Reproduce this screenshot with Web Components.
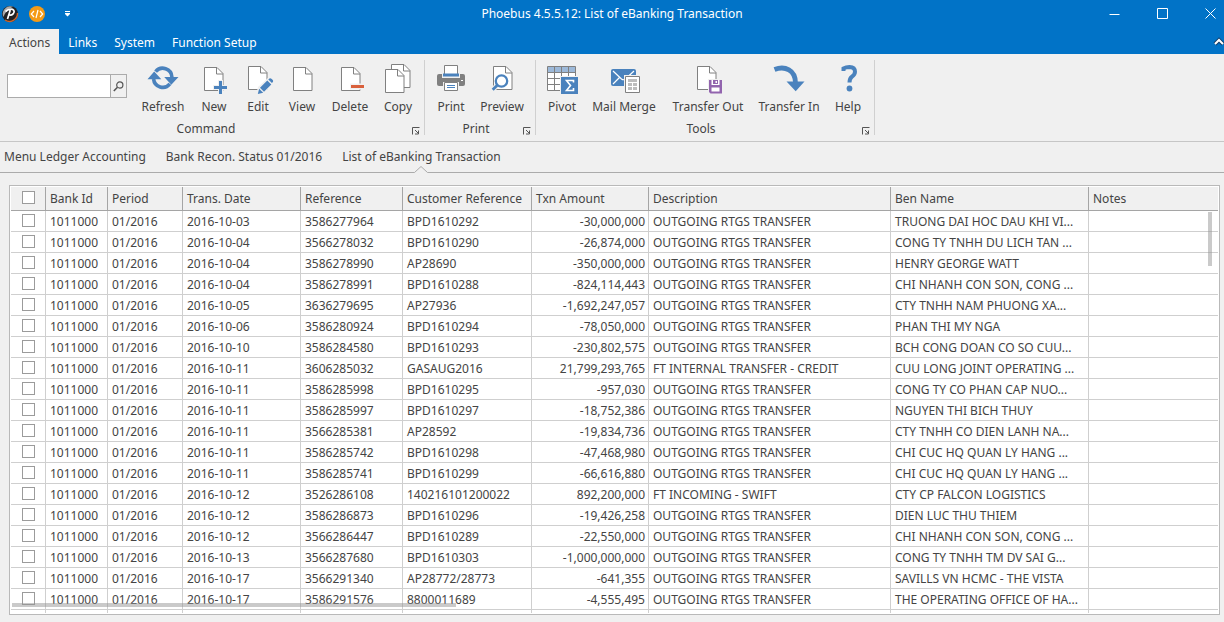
<!DOCTYPE html>
<html lang="en">
<head>
<meta charset="utf-8">
<title>Phoebus 4.5.5.12: List of eBanking Transaction</title>
<style>
  html, body { margin: 0; height: 100%; }
  body {
    font: 12px/16px "Noto Sans", "Open Sans", sans-serif;
    color: #444;
    background: #f0f0f0;
    --blue: #0173c7;
    --face: #f0f0f0;
    --accent: #4a82bd;
    --line: #808080;
  }
</style>
</head>
<body>
<app-window>
  <title-bar slot="title">Phoebus 4.5.5.12: List of eBanking Transaction</title-bar>
  <ribbon-tabs slot="tabs">
    <ribbon-tab active>Actions</ribbon-tab>
    <ribbon-tab>Links</ribbon-tab>
    <ribbon-tab>System</ribbon-tab>
    <ribbon-tab>Function Setup</ribbon-tab>
  </ribbon-tabs>
  <ribbon-bar slot="ribbon">
    <ribbon-group label="Command">
      <search-box></search-box>
      <ribbon-button icon="refresh" size="l">Refresh</ribbon-button>
      <ribbon-button icon="new">New</ribbon-button>
      <ribbon-button icon="edit">Edit</ribbon-button>
      <ribbon-button icon="view">View</ribbon-button>
      <ribbon-button icon="delete" size="m">Delete</ribbon-button>
      <ribbon-button icon="copy">Copy</ribbon-button>
    </ribbon-group>
    <ribbon-group label="Print">
      <ribbon-button icon="print">Print</ribbon-button>
      <ribbon-button icon="preview" size="l">Preview</ribbon-button>
    </ribbon-group>
    <ribbon-group label="Tools">
      <ribbon-button icon="pivot">Pivot</ribbon-button>
      <ribbon-button icon="mail" size="xl">Mail Merge</ribbon-button>
      <ribbon-button icon="out" size="xxl">Transfer Out</ribbon-button>
      <ribbon-button icon="in" size="ml">Transfer In</ribbon-button>
      <ribbon-button icon="help">Help</ribbon-button>
    </ribbon-group>
  </ribbon-bar>
  <doc-tabs slot="docs">
    <doc-tab>Menu Ledger Accounting</doc-tab>
    <doc-tab>Bank Recon. Status 01/2016</doc-tab>
    <doc-tab active>List of eBanking Transaction</doc-tab>
  </doc-tabs>
  <data-grid></data-grid>
</app-window>

<script>
const page = (x, y) =>
  `<path d="M${x + .5} ${y + .5}h12.5l6 6v17h-18.5z" fill="#fff" stroke="var(--line)"/>
   <path d="M${x + 12.5} ${y + .5}v6.5h6.5" fill="none" stroke="var(--line)"/>`;

const ICONS = {
  refresh: `<g fill="none" stroke="var(--accent)" stroke-width="3.6">
      <path d="M8.6 8.6A9.2 9.2 0 0 1 24.9 14"/><path d="M6.6 16A9.2 9.2 0 0 0 22.9 20.9"/></g>
      <path d="M.5 16.3h13.8L7.2 8.6zM17.2 14h14.3l-7.2 7.8z" fill="var(--accent)"/>`,
  new: page(6, 4) + `<path d="M22.5 17v15M15 24.5h15" stroke="var(--face)" stroke-width="5"/>
      <path d="M22.5 18v13M16 24.5h13" stroke="var(--accent)" stroke-width="3"/>`,
  edit: page(6, 3) + `<path d="M14 32l2-8 11-10 6 5-11 11z" fill="var(--face)"/>
      <path d="M18 24.800l7.300-7.300 4 4-7.300 7.300zM26.300 16.500l1.100-1q1-.6 2 .2l1.400 1.400q.7 1 .1 1.900l-1 1.100z" fill="var(--accent)"/>
      <path d="M17.100 25.700l4.100 4.100-5.400 1.200z" fill="var(--accent)"/>`,
  view: page(7, 4),
  delete: page(7, 4) + `<path d="M16 20.500h15v6h-15z" fill="var(--face)"/><path d="M17 22h13v3h-13z" fill="#d9603b"/>`,
  copy: page(9, 1) + page(3, 6),
  print: `<path d="M4 11h24q2 0 2 2v8q0 2-2 2h-24q-2 0-2-2v-8q0-2 2-2z" fill="var(--line)"/>
      <path d="M7 10h18v5h-18z" fill="var(--face)"/>
      <path d="M9.500 12V2.500h13V12z" fill="#fff" stroke="var(--line)"/><path d="M8 10.500h16v3h-16z" fill="var(--accent)"/>
      <path d="M8 19h16v5h-16z" fill="var(--face)"/><path d="M9.500 19.500h13v8h-13z" fill="#fff" stroke="var(--line)"/>
      <path d="M12 22.500h8M12 24.500h8" stroke="var(--accent)"/><path d="M26 17h2v1h-2z" fill="#fff"/>`,
  preview: page(7, 3) + `<path d="M11 22.500l-5 5" stroke="var(--face)" stroke-width="5"/>
      <circle cx="15.500" cy="18" r="5.700" fill="#fff" stroke="var(--accent)" stroke-width="2.300"/>
      <path d="M11.500 22l-4.800 4.800" stroke="var(--accent)" stroke-width="2.800"/>`,
  pivot: `<path d="M1.500 3.500h28v24h-28z" fill="#fff"/><path d="M1.500 3.500h28v6h-28z" fill="#9db9d9"/>
      <path d="M1.500 3.500h28v24h-28zM8.500 3.500v24M15.500 3.500v24M22.500 3.500v24M1.500 9.500h28M1.500 15.500h28M1.500 21.500h28" fill="none" stroke="var(--line)"/>
      <path d="M14 13h18v19h-18z" fill="var(--face)"/><path d="M15 14h17v17h-17z" fill="var(--accent)"/>
      <path d="M27.500 19.500v-2h-7l4 5-4 5h7v-2.500" fill="none" stroke="#fff" stroke-width="1.600"/>`,
  mail: `<path d="M5 6h21q2 0 2 2v15h-23q-2 0-2-2v-13q0-2 2-2z" fill="var(--accent)"/>
      <path d="M5 8l8.500 8q2 1.500 4 0L26 8M5 21l7-7M25 20l-6-5" fill="none" stroke="#fff" stroke-width="1.200"/>
      <path d="M16 12h17v19h-17z" fill="var(--face)"/><path d="M17.500 13.500h14v16h-14z" fill="#fff" stroke="var(--line)"/>
      <path d="M20 16h9v3h-9zM20 20h4v3h-4zM25 20h4v3h-4zM20 24h4v3h-4zM25 24h4v3h-4z" fill="#bdbdbd"/>`,
  out: page(5, 3) + `<path d="M16 16h15v15h-15z" fill="var(--face)"/>
      <path d="M17 17h13v13.500h-11.500l-1.500-1.500z" fill="#9264ae"/><path d="M19.500 17h8v5h-8zM19.500 24.500h8v4h-8z" fill="#fff"/>
      <path d="M21 17h5v4h-5z" fill="#9264ae"/><path d="M23.500 18h1.500v2h-1.500z" fill="#fff"/>`,
  in: `<path d="M1.500 6.500C12 2.500 22.500 7 22.500 20" fill="none" stroke="var(--accent)" stroke-width="4.800"/>
      <path d="M13.500 18.500h18l-8.800 9.800z" fill="var(--accent)"/>`,
  help: `<path d="M11.500 8V5.500Q14 4 17.500 4Q23 4.200 23 8.800Q23 11.500 20 13.700Q17.500 15.500 17.500 19.500" fill="none" stroke="var(--accent)" stroke-width="4"/>
      <circle cx="17.500" cy="25.500" r="2.900" fill="var(--accent)"/>`
};

function define(name, markup, setup) {
  const template = document.createElement('template');
  template.innerHTML = markup;
  customElements.define(name, class extends HTMLElement {
    constructor() {
      super();
      this.attachShadow({ mode: 'open' }).append(template.content.cloneNode(true));
    }
    connectedCallback() { if (setup) setup(this, this.shadowRoot); }
  });
}

const RESET = `button { font: inherit; color: inherit; background: none; border: 0; padding: 0; margin: 0; }
  svg { display: block; }`;

define('app-window', `
<style>
  :host { display: flex; flex-direction: column; height: 100vh; min-height: 320px; background: var(--face); }
  header { background: var(--blue); color: #fff; }
  main { flex: 1; min-height: 0; display: flex; padding: 12px 4px 7px 9px; }
  ::slotted(data-grid) { flex: 1; min-width: 0; }
</style>
<header><slot name="title"></slot><slot name="tabs"></slot></header>
<slot name="ribbon"></slot>
<slot name="docs"></slot>
<main><slot></slot></main>`);

define('title-bar', `
<style>${RESET}
  :host { display: grid; grid-template-columns: 1fr auto 1fr; align-items: center; height: 27px; }
  .quick { display: flex; align-items: center; padding-left: 1px; gap: 10px; }
  .more { margin-left: 9px; }
  .controls { display: flex; justify-content: flex-end; gap: 37px; padding-right: 8px; }
</style>
<div class="quick">
  <svg width="18" height="18" viewBox="0 0 18 18" aria-hidden="true">
    <circle cx="9" cy="9" r="8" fill="#222"/>
    <path d="M2.500 12A7.500 7.500 0 0 1 12 1.800Q5 5 2.500 12z" fill="#aaa"/>
    <path d="M4 15A8 8 0 0 0 16.500 8" fill="none" stroke="#c8642d" stroke-width="1.500"/>
    <path d="M4.500 6.500Q8 3.500 11.500 4.300Q14.500 6 12 9Q10 10.800 8 9.800M9.300 5L6.500 14" fill="none" stroke="#fff" stroke-width="1.700"/>
  </svg>
  <svg width="16" height="16" viewBox="0 0 16 16" aria-hidden="true">
    <circle cx="8" cy="8" r="8" fill="#f49b16"/>
    <path d="M5 5L2.300 8L5 11M11 5l2.700 3L11 11M9 4L7 12" fill="none" stroke="#fff" stroke-width="1.200"/>
  </svg>
  <button class="more" aria-label="Customize toolbar">
    <svg width="7" height="6" viewBox="0 0 7 6"><path d="M1 0h5v1h-5zM1 2h5v1L3.500 5.500 1 3z" fill="#fff"/></svg>
  </button>
</div>
<slot></slot>
<div class="controls">
  <button aria-label="Minimize"><svg width="11" height="11" viewBox="0 0 11 11"><path d="M.5 6.500h10" stroke="#fff"/></svg></button>
  <button aria-label="Maximize"><svg width="11" height="11" viewBox="0 0 11 11"><path d="M.5.5h10v10h-10z" fill="none" stroke="#fff"/></svg></button>
  <button aria-label="Close"><svg width="11" height="11" viewBox="0 0 11 11"><path d="M.5.5l10 10M10.500.5l-10 10" stroke="#fff"/></svg></button>
</div>`);

define('ribbon-tabs', `
<style>${RESET}
  :host { display: flex; align-items: stretch; height: 25px; padding-top: 2px; gap: 1px; }
  .collapse { margin-left: auto; }
</style>
<slot></slot>
<button class="collapse" aria-label="Collapse ribbon">
  <svg width="11" height="10" viewBox="0 0 11 10"><path d="M2 7l4-4 4 4" fill="none" stroke="#123c66" stroke-width="4"/><path d="M2 7l4-4 4 4" fill="none" stroke="#fff" stroke-width="2"/></svg>
</button>`);

define('ribbon-tab', `
<style>${RESET}
  :host { display: flex; }
  button { padding: 6px 8px 3px; }
  :host([active]) button { background: var(--face); color: #444; padding: 6px 9px 3px; }
</style>
<button><slot></slot></button>`);

define('ribbon-bar', `
<style>:host { display: flex; padding: 6px 0; height: 75px; border-bottom: 1px solid #c6c6c6; }</style>
<slot></slot>`);

define('ribbon-group', `
<style>${RESET}
  :host { display: flex; flex-direction: column; padding: 3px 4px 0; border-right: 1px solid #d0d0d0; }
  :host(:first-child) { padding-left: 0; }
  .items { display: flex; }
  .foot { display: flex; align-items: flex-end; margin-top: 8px; line-height: 12px; }
  .foot span { flex: 1; text-align: center; }
</style>
<div class="items"><slot></slot></div>
<div class="foot"><span></span><button aria-label="More options">
  <svg width="8" height="8" viewBox="0 0 8 8"><path d="M.5 7.500v-7h7M3 3l3.500 3.500M6.500 3.500v3.500h-3.500" fill="none" stroke="#555"/></svg>
</button></div>`, (host, root) => {
  root.querySelector('span').textContent = host.getAttribute('label');
});

define('ribbon-button', `
<style>${RESET}
  :host { display: block; width: 44px; }
  :host([size=m]) { width: 52px; }
  :host([size=l]) { width: 58px; }
  :host([size=ml]) { width: 74px; }
  :host([size=xl]) { width: 80px; }
  :host([size=xxl]) { width: 88px; }
  button { display: flex; flex-direction: column; align-items: center; width: 100%; white-space: nowrap; gap: 4px; }
</style>
<button><svg width="32" height="32" viewBox="0 0 32 32" overflow="visible" aria-hidden="true"></svg><slot></slot></button>`, (host, root) => {
  root.querySelector('svg').innerHTML = ICONS[host.getAttribute('icon')];
});

define('search-box', `
<style>${RESET}
  :host { display: block; padding: 11px 7px 0 7px; }
  form { display: flex; box-sizing: border-box; width: 120px; height: 24px; border: 1px solid #ababab; margin: 0; }
  input { flex: 1; min-width: 0; border: 0; padding: 0 4px; font: inherit; background: #fff; border-radius: 0; outline: 0; }
  button { width: 16px; border-left: 1px solid #ababab; display: grid; place-items: center; }
</style>
<form><input type="text" aria-label="Search actions"><button type="button" aria-label="Search">
  <svg width="11" height="11" viewBox="0 0 11 11"><circle cx="6.800" cy="4" r="3.100" fill="none" stroke="#555" stroke-width="1.200"/><path d="M4.500 6.300L.8 10" stroke="#555" stroke-width="1.600"/></svg>
</button></form>`);

define('doc-tabs', `
<style>:host { display: flex; gap: 20px; padding: 0 4px; height: 30px; border-bottom: 1px solid #ababab; }</style>
<slot></slot>`);

define('doc-tab', `
<style>${RESET}
  :host { display: flex; position: relative; }
  button { padding: 0 0 1px; white-space: nowrap; }
  svg { display: none; position: absolute; bottom: -1px; left: calc(50% - 7px); }
  :host([active]) svg { display: block; }
</style>
<button><slot></slot></button>
<svg width="14" height="7" viewBox="0 0 14 7" aria-hidden="true"><path d="M0 7L7 .5L14 7z" fill="var(--face)"/><path d="M.5 6.500L7 .5L13.500 6.500" fill="none" stroke="#ababab"/></svg>`);

const COLUMNS = ['Bank Id', 'Period', 'Trans. Date', 'Reference', 'Customer Reference', 'Txn Amount', 'Description', 'Ben Name', 'Notes'];
const RTGS = 'OUTGOING RTGS TRANSFER';
const ROWS = [
  ['2016-10-03', '3586277964', 'BPD1610292', '-30,000,000', RTGS, 'TRUONG DAI HOC DAU KHI VI...'],
  ['2016-10-04', '3566278032', 'BPD1610290', '-26,874,000', RTGS, 'CONG TY TNHH DU LICH TAN ...'],
  ['2016-10-04', '3586278990', 'AP28690', '-350,000,000', RTGS, 'HENRY GEORGE WATT'],
  ['2016-10-04', '3586278991', 'BPD1610288', '-824,114,443', RTGS, 'CHI NHANH CON SON, CONG ...'],
  ['2016-10-05', '3636279695', 'AP27936', '-1,692,247,057', RTGS, 'CTY TNHH NAM PHUONG XA...'],
  ['2016-10-06', '3586280924', 'BPD1610294', '-78,050,000', RTGS, 'PHAN THI MY NGA'],
  ['2016-10-10', '3586284580', 'BPD1610293', '-230,802,575', RTGS, 'BCH CONG DOAN CO SO CUU...'],
  ['2016-10-11', '3606285032', 'GASAUG2016', '21,799,293,765', 'FT INTERNAL TRANSFER - CREDIT', 'CUU LONG JOINT OPERATING ...'],
  ['2016-10-11', '3586285998', 'BPD1610295', '-957,030', RTGS, 'CONG TY CO PHAN CAP NUO...'],
  ['2016-10-11', '3586285997', 'BPD1610297', '-18,752,386', RTGS, 'NGUYEN THI BICH THUY'],
  ['2016-10-11', '3566285381', 'AP28592', '-19,834,736', RTGS, 'CTY TNHH CO DIEN LANH NA...'],
  ['2016-10-11', '3586285742', 'BPD1610298', '-47,468,980', RTGS, 'CHI CUC HQ QUAN LY HANG ...'],
  ['2016-10-11', '3586285741', 'BPD1610299', '-66,616,880', RTGS, 'CHI CUC HQ QUAN LY HANG ...'],
  ['2016-10-12', '3526286108', '140216101200022', '892,200,000', 'FT INCOMING - SWIFT', 'CTY CP FALCON LOGISTICS'],
  ['2016-10-12', '3586286873', 'BPD1610296', '-19,426,258', RTGS, 'DIEN LUC THU THIEM'],
  ['2016-10-12', '3566286447', 'BPD1610289', '-22,550,000', RTGS, 'CHI NHANH CON SON, CONG ...'],
  ['2016-10-13', '3566287680', 'BPD1610303', '-1,000,000,000', RTGS, 'CONG TY TNHH TM DV SAI G...'],
  ['2016-10-17', '3566291340', 'AP28772/28773', '-641,355', RTGS, 'SAVILLS VN HCMC - THE VISTA'],
  ['2016-10-17', '3586291576', '8800011689', '-4,555,495', RTGS, 'THE OPERATING OFFICE OF HA...']
];

define('data-grid', `
<style>
  :host { display: block; position: relative; box-sizing: border-box; border: 1px solid #b9b9b9; padding: 1px; background: #fff; }
  .view { height: 100%; overflow: hidden; }
  table { width: 100%; border-collapse: separate; border-spacing: 0; table-layout: fixed; }
  .c0 { width: 35px; } .c1 { width: 62px; } .c2 { width: 75px; } .c3 { width: 118px; } .c4 { width: 102px; }
  .c5 { width: 129px; } .c6 { width: 117px; } .c7 { width: 242px; } .c8 { width: 198px; }
  th, td { box-sizing: border-box; padding: 0 3px 0 4px; text-align: left; font-weight: normal; white-space: nowrap;
    overflow: hidden; border: 0 solid #cfcfcf; border-width: 0 1px 1px 0; }
  th { height: 24px; background: var(--face); border-color: #a5a5a5; }
  td { height: 21px; padding-top: 2px; }
  th:last-child, td:last-child { border-right: 0; }
  th:first-child { padding: 0 0 2px; }
  td:first-child { padding: 0 0 1px; }
  td:nth-child(7) { text-align: right; }
  input { appearance: none; display: block; box-sizing: border-box; width: 13px; height: 13px; margin: 0 auto; border: 1px solid #9b9b9b; background: #fff; }
  .bar { position: absolute; background: rgba(150, 150, 150, .5); }
  .v { right: 7px; top: 26px; width: 4px; height: 54px; }
  .h { left: 2px; bottom: 7px; width: 444px; height: 4px; }
</style>
<div class="view"><table>
  <colgroup>${[0, 1, 2, 3, 4, 5, 6, 7, 8, 9].map(i => `<col class="c${i}">`).join('')}</colgroup>
  <thead><tr><th><input type="checkbox" aria-label="Select all"></th>${COLUMNS.map(c => `<th scope="col">${c}</th>`).join('')}</tr></thead>
  <tbody>${ROWS.map(r => `<tr><td><input type="checkbox" aria-label="Select ${r[1]}"></td><td>1011000</td><td>01/2016</td>${r.map(v => `<td>${v}</td>`).join('')}<td></td></tr>`).join('')}
  <tr>${'<td></td>'.repeat(10)}</tr></tbody>
</table></div>
<div class="bar v"></div><div class="bar h"></div>`);
</script>
</body>
</html>
